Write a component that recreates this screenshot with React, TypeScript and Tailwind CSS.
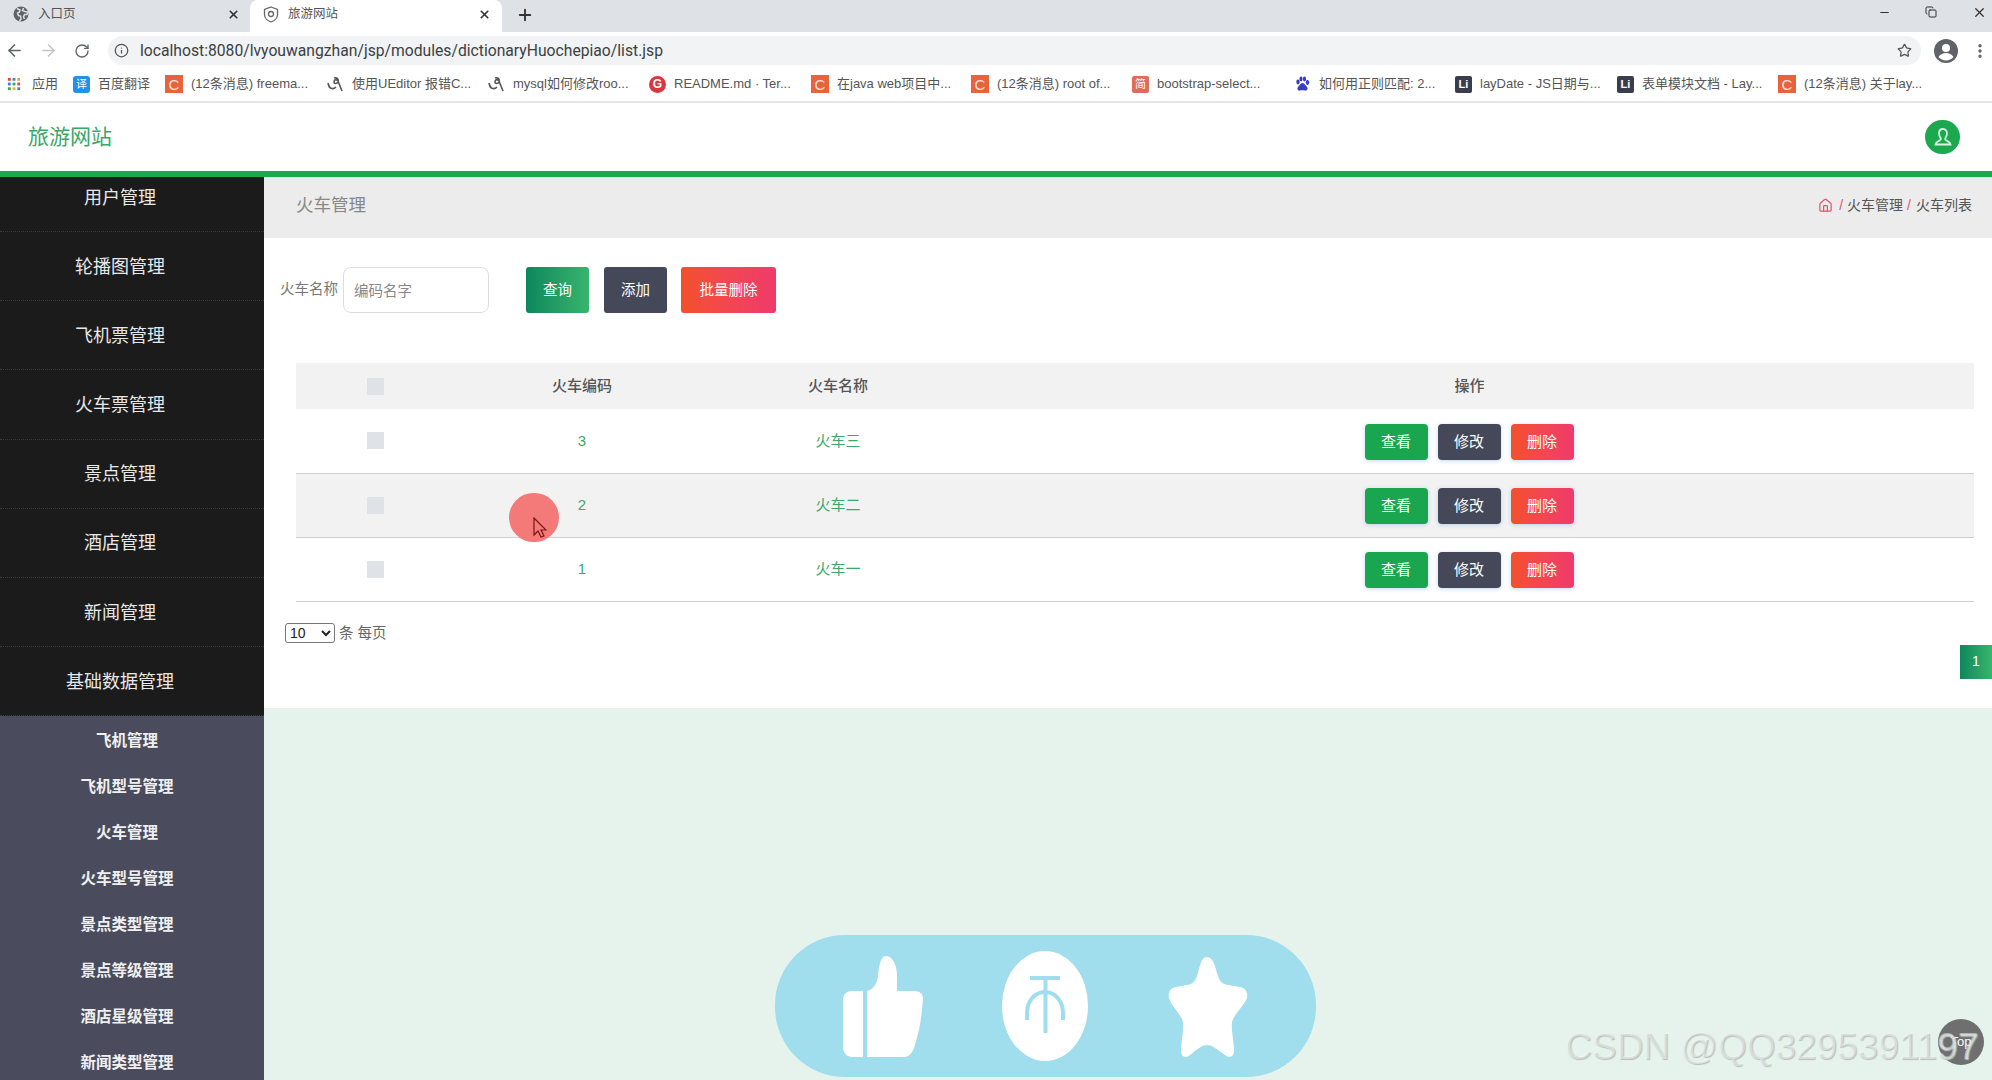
import { ArrowLeft, ArrowRight, RotateCw, Star, X, Plus, Minus, Copy, House, Info, EllipsisVertical } from "lucide-react";

const font = "font-['Liberation_Sans','Noto_Sans_CJK_SC',sans-serif]";

function Fav({ kind }: { kind: string }) {
  if (kind === "fy") return <span className="flex h-[17px] w-[17px] items-center justify-center rounded-[3px] bg-[#2291e8] text-[11px] text-white">译</span>;
  if (kind === "c") return <span className="flex h-[18px] w-[18px] items-center justify-center bg-[#e8623c] text-[15px] leading-none text-[#fbe3d8]">C</span>;
  if (kind === "u") return (
    <svg width="17" height="17" viewBox="0 0 17 17" fill="none" stroke="#555" strokeWidth="1.600">
      <path d="M1 7c1 6 5 7 8 4M7 2c3-1 5 1 4 4-1 2-4 2-4 0 0-3 3-3 4-1l4 10" />
    </svg>
  );
  if (kind === "g") return <span className="flex h-[17px] w-[17px] items-center justify-center rounded-full bg-[#d9363e] text-[12px] font-bold leading-none text-white">G</span>;
  if (kind === "j") return <span className="flex h-[17px] w-[17px] items-center justify-center rounded-[2px] bg-[#e06b5c] text-[11px] leading-none text-white">简</span>;
  if (kind === "b") return (
    <svg width="17" height="17" viewBox="0 0 17 17" fill="#3b3fbf">
      <ellipse cx="4" cy="6" rx="1.7" ry="2.4" /><ellipse cx="7" cy="3" rx="1.6" ry="2.4" /><ellipse cx="10.5" cy="3" rx="1.6" ry="2.4" /><ellipse cx="13.5" cy="6.5" rx="1.7" ry="2.4" />
      <path d="M8.500 7c-2.200 0-3 2.500-4.500 4-1.300 1.500-.3 4 2 3.600 1-.2 1.700-.4 2.500-.4s1.600.2 2.500.4c2.300.4 3.300-2.100 2-3.600-1.500-1.500-2.300-4-4.500-4z" />
    </svg>
  );
  return <span className="flex h-[17px] w-[17px] items-center justify-center rounded-[2px] bg-[#3a3d4b] text-[11px] font-bold leading-none text-white">Li</span>;
}

const bookmarks = [
  { k: "fy", t: "百度翻译", w: "w-[92px]" },
  { k: "c", t: "(12条消息) freema...", w: "w-[162px]" },
  { k: "u", t: "使用UEditor 报错C...", w: "w-[161px]" },
  { k: "u", t: "mysql如何修改roo...", w: "w-[161px]" },
  { k: "g", t: "README.md · Ter...", w: "w-[162px]" },
  { k: "c", t: "在java web项目中...", w: "w-[160px]" },
  { k: "c", t: "(12条消息) root of...", w: "w-[161px]" },
  { k: "j", t: "bootstrap-select...", w: "w-[162px]" },
  { k: "b", t: "如何用正则匹配: 2...", w: "w-[161px]" },
  { k: "l", t: "layDate - JS日期与...", w: "w-[162px]" },
  { k: "l", t: "表单模块文档 - Lay...", w: "w-[161px]" },
  { k: "c", t: "(12条消息) 关于lay...", w: "w-[162px]" },
];

const topMenu = ["轮播图管理", "飞机票管理", "火车票管理", "景点管理", "酒店管理", "新闻管理", "基础数据管理"];
const subMenu = ["飞机管理", "飞机型号管理", "火车管理", "火车型号管理", "景点类型管理", "景点等级管理", "酒店星级管理", "新闻类型管理"];
const rows = [
  { id: "3", name: "火车三", bg: "bg-white", color: "text-[#3fa76c]" },
  { id: "2", name: "火车二", bg: "bg-[#f2f2f2]", color: "text-[#3fa76c]" },
  { id: "1", name: "火车一", bg: "bg-white", color: "text-[#3fa76c]" },
];

function ChromeBars() {
  return (
    <div className="shrink-0 bg-white">
      <div className="flex h-[32px] items-stretch bg-[#dee1e6]">
        <div className="flex w-[250px] items-center pb-[4px] pl-[13px] pr-[10px] text-[12.5px] text-[#555]">
          <svg width="16" height="16" viewBox="0 0 16 16">
            <circle cx="8" cy="8" r="7.500" fill="#5f6368" />
            <path d="M4 2.500l3 1.500-.5 2-2 1 1 2.500 2 .5.5 3-1.500 2M10.500 2l-1 2.500 2.500 1 3 .5-1 2.500-2.500 0-1 2.500 1 2" fill="none" stroke="#dee1e6" strokeWidth="1.500" />
          </svg>
          <span className="ml-[9px] flex-1">入口页</span>
          <X size={13} strokeWidth={3} className="text-[#333]" />
        </div>
        <div className="flex w-[252px] items-center rounded-t-[8px] bg-white pb-[4px] pl-[13px] pr-[11px] text-[12.5px] text-[#555]">
          <svg width="16" height="17" viewBox="0 0 16 17" fill="none" stroke="#666" strokeWidth="1.300">
            <path d="M8 1l6.500 2.500v5c0 3.500-3 6.500-6.500 7.500-3.500-1-6.500-4-6.500-7.500v-5z" />
            <circle cx="8" cy="8" r="2.500" />
          </svg>
          <span className="ml-[9px] flex-1">旅游网站</span>
          <X size={13} strokeWidth={3} className="text-[#333]" />
        </div>
        <div className="flex flex-1 items-center pb-[2px] pl-[14px]">
          <Plus size={18} strokeWidth={2.500} className="text-[#333]" />
          <div className="flex-1" />
          <Minus size={13} className="mb-[6px] mr-[34px] text-[#333]" />
          <Copy size={12} className="mb-[6px] mr-[35px] text-[#333]" />
          <X size={15} className="mb-[6px] mr-[5px] text-[#333]" />
        </div>
      </div>
      <div className="box-border flex h-[33px] items-center pt-[4px]">
        <ArrowLeft size={19} className="ml-[5px] text-[#5f6368]" />
        <ArrowRight size={19} className="ml-[15px] text-[#c2c4c8]" />
        <RotateCw size={16} className="ml-[16px] text-[#5f6368]" />
        <div className="ml-[18px] flex h-[29px] w-[1813px] items-center rounded-full bg-[#f1f3f4] pr-[9px]">
          <Info size={15} className="ml-[6px] text-[#555]" />
          <span className="ml-[11px] flex-1 font-['Roboto',sans-serif] text-[15.700px] text-[#3c4043]">localhost:8080/lvyouwangzhan/jsp/modules/dictionaryHuochepiao/list.jsp</span>
          <Star size={15} className="text-[#555]" />
        </div>
        <svg width="24" height="24" viewBox="0 0 24 24" className="ml-[13px]">
          <circle cx="12" cy="12" r="12" fill="#5f6368" />
          <circle cx="12" cy="9" r="4" fill="#fff" />
          <path d="M4.500 18c2-3 4.500-4 7.500-4s5.500 1 7.500 4c-2 2.300-4.500 3.500-7.500 3.500s-5.500-1.200-7.500-3.500z" fill="#fff" />
        </svg>
        <EllipsisVertical size={18} strokeWidth={2.500} className="ml-[13px] text-[#5f6368]" />
      </div>
      <div className="flex h-[38px] items-center border-b-2 border-[#e3e4e6] pt-[2px] text-[13px] text-[#555]">
        <svg width="15" height="15" viewBox="0 0 16 16" className="ml-[7px] shrink-0">
          <rect x="1" y="1" width="3" height="3" fill="#d9453b" /><rect x="6" y="1" width="3" height="3" fill="#3f7fe0" /><rect x="11" y="1" width="3" height="3" fill="#d9a53b" />
          <rect x="1" y="6" width="3" height="3" fill="#3f7fe0" /><rect x="6" y="6" width="3" height="3" fill="#3aa55b" /><rect x="11" y="6" width="3" height="3" fill="#d9453b" />
          <rect x="1" y="11" width="3" height="3" fill="#3aa55b" /><rect x="6" y="11" width="3" height="3" fill="#e5b73b" /><rect x="11" y="11" width="3" height="3" fill="#3f7fe0" />
        </svg>
        <span className="ml-[10px] w-[41px] shrink-0">应用</span>
        {bookmarks.map((b) => (
          <div key={b.t} className={`flex shrink-0 items-center gap-[8px] whitespace-nowrap ${b.w}`}>
            <Fav kind={b.k} />
            <span>{b.t}</span>
          </div>
        ))}
      </div>
    </div>
  );
}

function Sidebar() {
  return (
    <aside className="w-[264px] shrink-0 overflow-hidden bg-[#1b1b1b]">
      <div className="box-border flex h-[55px] items-center justify-center border-b border-dotted border-[#3a3a3a] pb-[12px] pr-[24px] text-[18px] text-[#e8e8e8]">用户管理</div>
      {topMenu.map((m) => (
        <div key={m} className="box-border flex h-[69.200px] items-center justify-center border-b border-dotted border-[#3a3a3a] pr-[24px] pt-[2px] text-[18px] text-[#e8e8e8]">{m}</div>
      ))}
      <div className="bg-[#4a4c5d] pr-[10px]">
        {subMenu.map((m) => (
          <div key={m} className="flex h-[46.100px] items-center justify-center pt-[2px] text-[15.500px] font-bold text-[#f0f0f0]">{m}</div>
        ))}
      </div>
    </aside>
  );
}

function ActionBtn({ cls, text }: { cls: string; text: string }) {
  return <button className={`h-[36px] w-[63px] rounded-[4px] pt-[1px] text-[15px] text-white shadow-[0_1px_4px_rgba(80,150,220,0.35)] ${cls}`}>{text}</button>;
}

function Main() {
  return (
    <main className="flex min-w-0 flex-1 flex-col bg-[#e6f2ec]">
      <div className="flex h-[61px] shrink-0 items-center justify-between bg-[#ececec] pb-[4px] pl-[32px] pr-[20px]">
        <span className="text-[17.500px] text-[#888]">火车管理</span>
        <div className="flex items-center text-[14px] text-[#555]">
          <House size={15} className="text-[#e0586a]" />
          <span className="ml-[6px] mr-[4px] text-[#e0586a]">/</span>
          <span>火车管理</span>
          <span className="ml-[4px] mr-[5px] text-[#e0586a]">/</span>
          <span>火车列表</span>
        </div>
      </div>
      <div className="h-[470px] shrink-0 bg-white pt-[29px]">
        <div className="flex items-center pl-[16px]">
          <label className="w-[63px] text-[14.500px] text-[#777]">火车名称</label>
          <input readOnly placeholder="编码名字" className="box-border h-[46px] w-[146px] rounded-[8px] border border-[#ddd] pl-[10px] pt-[1px] text-[14.500px] outline-none placeholder:text-[#888]" />
          <button className="ml-[37px] h-[46px] w-[63px] rounded-[3px] bg-gradient-to-r from-[#0b875c] to-[#37b56c] pt-[2px] text-[14.500px] text-white">查询</button>
          <button className="ml-[15px] h-[46px] w-[63px] rounded-[3px] bg-[#454858] pt-[2px] text-[14.500px] text-white">添加</button>
          <button className="ml-[14px] h-[46px] w-[95px] rounded-[3px] bg-gradient-to-r from-[#f4502a] to-[#f03a6b] pt-[2px] text-[14.500px] text-white">批量删除</button>
        </div>
        <table className="ml-[32px] mt-[50px] w-[1678px] table-fixed border-collapse text-[15px]">
          <colgroup>
            <col className="w-[158px]" /><col className="w-[256px]" /><col className="w-[256px]" /><col />
          </colgroup>
          <thead>
            <tr className="h-[46px] bg-[#f2f2f2] text-[#555]">
              <th className="font-normal"><span className="mx-auto block h-[17px] w-[17px] bg-[#dfe2e7]" /></th>
              <th className="font-medium">火车编码</th>
              <th className="font-medium">火车名称</th>
              <th className="pr-[1px] font-medium">操作</th>
            </tr>
          </thead>
          <tbody>
            {rows.map((r) => (
              <tr key={r.id} className={`h-[64px] border-b border-[#cfcfcf] text-center ${r.color} ${r.bg}`}>
                <td><span className="mx-auto block h-[17px] w-[17px] bg-[#dfe2e7]" /></td>
                <td>{r.id}</td>
                <td>{r.name}</td>
                <td>
                  <div className="flex justify-center gap-[10px] pr-[2px] pt-[2px]">
                    <ActionBtn cls="bg-[#1aa64f]" text="查看" />
                    <ActionBtn cls="bg-[#454858]" text="修改" />
                    <ActionBtn cls="bg-gradient-to-r from-[#f4502a] to-[#f03a6b]" text="删除" />
                  </div>
                </td>
              </tr>
            ))}
          </tbody>
        </table>
        <div className="mt-[21px] flex items-start pl-[21px] text-[14.500px] text-[#666]">
          <select className="box-border h-[20px] w-[50px] rounded-[3px] border border-[#777] bg-white text-[14px] text-[#222]">
            <option>10</option>
          </select>
          <span className="ml-[4px]">条 每页</span>
          <div className="flex-1" />
          <span className="mt-[22px] flex h-[34px] w-[32px] items-center justify-center bg-gradient-to-r from-[#0b875c] to-[#37b56c] text-[14px] text-white">1</span>
        </div>
      </div>
    </main>
  );
}

function Overlays() {
  return (
    <>
      <div className="absolute left-[509px] top-[493px] h-[49px] w-[50px] rounded-full bg-[#f37a78]" />
      <svg className="absolute left-[533px] top-[517px]" width="14" height="22" viewBox="0 0 14 22">
        <path d="M1 1v17l4-4 3 6 3-1-3-6h5z" fill="#f37a78" stroke="#7a1414" strokeWidth="1.200" />
      </svg>
      <div className="absolute left-[775px] top-[935px] flex h-[142px] w-[541px] items-center rounded-[70px] bg-[#a0deed] pl-[68px]">
        <svg width="80" height="101" viewBox="0 0 80 101" className="shrink-0" fill="#fff">
          <path d="M20 35v66H9c-5 0-9-4-9-10V44c0-6 4-9 9-9z" />
          <path d="M24 35c5-1 10-6 11-15 1-8 2-20 8-20s11 8 11 20v15h17c6 0 9 3 9 8-1 14-3 30-7 42-2 10-6 16-12 16H24z" />
        </svg>
        <svg width="86" height="110" viewBox="0 0 86 110" className="ml-[79px] shrink-0">
          <ellipse cx="43" cy="55" rx="43" ry="55" fill="#fff" />
          <path d="M28 27h30M43.500 27v55M25 69V62c0-12 8-21 18-21s18 9 18 21v7" fill="none" stroke="#a0deed" strokeWidth="4" />
        </svg>
        <svg width="80" height="101" viewBox="0 0 80 101" className="ml-[80px] shrink-0" fill="#fff">
          <path d="M39 1C45 1 47 10 49 17C51 24 53 28 60 29L72 31C78 32 80 37 79 42C76 50 66 58 64 66C63 75 66 85 66 95C66 100 62 103 57 99C50 94 44 89 39 89C34 89 28 94 22 99C17 103 13 100 13 95C13 85 16 75 15 66C13 58 3 50 1 42C0 37 2 32 8 31L19 29C26 28 28 24 30 17C32 10 33 1 39 1Z" />
        </svg>
      </div>
      <div className="absolute left-[1938px] top-[1019px] flex h-[46px] w-[46px] items-center justify-center rounded-full bg-[#6f6f6f] text-[13px] text-white">Top</div>
      <div className="absolute left-[1565px] top-[1024px] whitespace-nowrap font-['Liberation_Sans',sans-serif] text-[37px] leading-[46px] text-[#ffffff70] [text-shadow:1px_1px_1px_#b5c0bb]">CSDN @QQ3295391197</div>
    </>
  );
}

export default function App() {
  return (
    <div className={`relative flex h-[1080px] w-[1992px] flex-col overflow-hidden bg-white ${font}`}>
      <ChromeBars />
      <header className="box-border flex h-[74px] shrink-0 items-center justify-between border-b-[6px] border-[#1ba84f] bg-white pl-[28px] pr-[32px]">
        <span className="text-[21px] text-[#3aa76a]">旅游网站</span>
        <span className="flex h-[34px] w-[35px] items-center justify-center rounded-full bg-[#1ba84f]">
          <svg width="20" height="20" viewBox="0 0 20 20" fill="none" stroke="#d6f5e0" strokeWidth="1.800">
            <path d="M10 2c-2.500 0-4 2-4 4.500S7.500 11 8 12c.3 1.500-5 2-5.500 5.500h15C17 14 11.700 13.500 12 12c.5-1 2-3 2-5.500S12.500 2 10 2z" />
          </svg>
        </span>
      </header>
      <div className="flex min-h-0 flex-1">
        <Sidebar />
        <Main />
      </div>
      <Overlays />
    </div>
  );
}
